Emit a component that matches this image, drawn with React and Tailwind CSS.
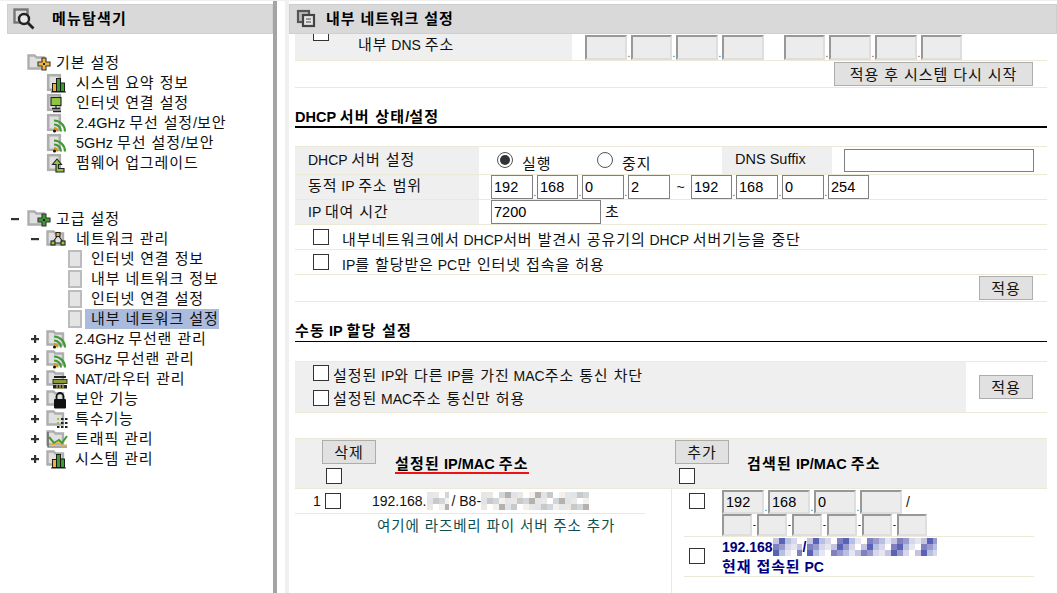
import React from 'react';

// hangul runs are wider than the latin ones in the original font
const T = ({ children, wide }) => {
  const parts = String(children).split(/([\uAC00-\uD7A3]+(?: [\uAC00-\uD7A3]+)*)/);
  return (
    <>
      {parts.map((p, i) =>
        i % 2 === 1 ? (
          <span key={i} className={wide ? 'text-[15px] tracking-[1.2px]' : 'text-[15px] tracking-[0.9px]'}>{p}</span>
        ) : (
          <span key={i}>{p}</span>
        )
      )}
    </>
  );
};

const Folder = () => (
  <path d="M1.500 2.500h6l2 2h7.500v11H1.500z" fill="#e0e0e0" stroke="#aeaeae" strokeWidth="2.400" />
);
const Page = () => <rect x="2.200" y="2.200" width="11.600" height="14.600" fill="#e0e0e0" stroke="#aeaeae" strokeWidth="2.600" />;

const Bars = () => (
  <g stroke="#111" strokeWidth="0.900">
    <rect x="6.500" y="10.500" width="4" height="8" fill="#f0b040" />
    <rect x="10.500" y="5.500" width="4" height="13" fill="#3f9a34" />
    <rect x="14.500" y="10" width="4" height="8.500" fill="#3f9a34" />
    <path d="M5 19h15" />
  </g>
);
const Wifi = () => (
  <g fill="none" strokeWidth="2.200">
    <path d="M8 7.500a11 11 0 0 1 11 11" stroke="#3f9a34" />
    <path d="M8 11.500a7 7 0 0 1 7 7" stroke="#3f9a34" />
    <path d="M8 15a3.500 3.500 0 0 1 3.500 3.500" stroke="#c79a2a" />
    <circle cx="8.500" cy="18" r="1.500" fill="#111" stroke="none" />
  </g>
);
const OVERLAY = {
  bars: <Bars />,
  wifi: <Wifi />,
  monitor: (
    <g>
      <rect x="5" y="4.500" width="10" height="8" fill="#8ec63f" stroke="#222" strokeWidth="1.100" />
      <path d="M10 12.500v3M6 15.500h8M7 18.500h8" stroke="#222" strokeWidth="1.300" />
    </g>
  ),
  arrow: (
    <path d="M11 6l4.500 5.500h-3v4H18v3.500h-8v-7.500H6.500z" fill="#8ec63f" stroke="#222" strokeWidth="1.100" />
  ),
  network: (
    <g stroke="#222" strokeWidth="1.100" fill="none">
      <path d="M12 6l-5 7M12 6l5 7M7 14h10" />
      <rect x="10" y="3.500" width="4" height="4" fill="#f0b040" />
      <rect x="5" y="12" width="4" height="4" fill="#8ec63f" />
      <rect x="15" y="12" width="4" height="4" fill="#8ec63f" />
    </g>
  ),
  router: (
    <g>
      <rect x="8" y="7" width="12" height="2" fill="#222" />
      <rect x="7" y="10.500" width="14" height="4" fill="#8a9a30" stroke="#222" strokeWidth="0.900" />
      <rect x="7" y="16" width="14" height="3.500" fill="#222" />
      <path d="M11 16v3.500M14 16v3.500M17 16v3.500" stroke="#f0d040" strokeWidth="1" />
    </g>
  ),
  lock: (
    <g>
      <path d="M10.500 10V7.500a3.500 3.500 0 0 1 7 0V10" fill="none" stroke="#111" strokeWidth="1.800" />
      <rect x="8" y="10" width="12" height="9.500" rx="1" fill="#111" />
    </g>
  ),
  dots: (
    <g fill="#222">
      <path d="M11 9h2v2h-2zM11 13h2v2h-2z" fill="#8ec63f" />
      <path d="M15 9h2.500v2H15zM19 9h2.500v2H19zM15 13h2.500v2H15zM19 13h2.500v2H19zM11 17h2.500v2H11zM15 17h2.500v2H15zM19 17h2.500v2H19z" />
    </g>
  ),
  chart: (
    <g fill="none">
      <path d="M2 3v15h19" stroke="#555" strokeWidth="1.200" />
      <path d="M3 8l5 6 5-3 3 3 5-7" stroke="#3f9a34" strokeWidth="2" />
      <path d="M3 14l5 2 4-3 4 4 5-1" stroke="#f0b040" strokeWidth="1.500" />
    </g>
  ),
};

const SubIcon = ({ kind, page }) => (
  <svg width="24" height="20" viewBox="0 0 24 20" className="shrink-0">
    {page ? <Page /> : <Folder />}
    {OVERLAY[kind]}
  </svg>
);

const RootIcon = ({ color }) => (
  <svg width="25" height="20" viewBox="0 0 25 20" className="shrink-0">
    <Folder />
    <path
      d="M15 5h4v4h4v4h-4v4h-4v-4h-4V9h4z"
      fill={color}
      stroke="#333"
      strokeWidth="1.100"
    />
    <rect x="16" y="10" width="2" height="2" fill="#222" />
  </svg>
);

const Toggle = ({ open }) => (
  <svg width="8" height="8" viewBox="0 0 8 8" className="shrink-0">
    <rect x="0" y="3" width="8" height="2.200" fill="#333" />
    {!open && <rect x="3" y="0" width="2.200" height="8" fill="#333" />}
  </svg>
);

const Label = ({ children, className = '' }) => (
  <span className={`leading-5 whitespace-nowrap ${className}`}><T>{children}</T></span>
);

const SubRow = ({ kind, children }) => (
  <div className="flex items-center h-5 ml-[39px]">
    <SubIcon kind={kind} page />
    <span className="w-[6px]" />
    <Label>{children}</Label>
  </div>
);

const CollapsedRow = ({ kind, children }) => (
  <div className="flex items-center h-5 ml-[24px]">
    <Toggle />
    <span className="w-[7px]" />
    <SubIcon kind={kind} />
    <span className="w-[5px]" />
    <Label>{children}</Label>
  </div>
);

const Leaf = ({ children, selected }) => (
  <div className="flex items-center h-5 ml-[61px]">
    <span className="w-[14px] h-[18px] bg-[#e4e4e4] border-2 border-[#bcbcbc] shrink-0" />
    <span className="w-[3px]" />
    {selected ? (
      <Label className="bg-[#abbbdd] pl-[6px] h-5">{children}</Label>
    ) : (
      <Label className="ml-[6px]">{children}</Label>
    )}
  </div>
);

const Sidebar = () => (
  <aside className="w-[273px] shrink-0 pl-[7px] pt-[3px]">
    <div className="h-[30px] bg-[#d9d9d9] border border-[#cfcfcf] flex items-center pl-[4px]">
      <svg width="24" height="22" viewBox="0 0 24 22" className="shrink-0">
        <rect x="2.500" y="1.500" width="13" height="13" fill="#ddd" stroke="#777" strokeWidth="2.400" />
        <circle cx="12" cy="11" r="5" fill="#e8e8e8" stroke="#222" strokeWidth="2.400" />
        <path d="M16 15l5.500 5.500" stroke="#222" strokeWidth="2.800" />
      </svg>
      <span className="ml-[16px] font-bold text-black"><T wide>메뉴탐색기</T></span>
    </div>
    <nav className="pt-[19px] text-[#111] text-[14.5px]">
      <div className="flex items-center h-5 ml-5">
        <RootIcon color="#f2b63c" />
        <span className="w-[4px]" />
        <Label>기본 설정</Label>
      </div>
      <SubRow kind="bars">시스템 요약 정보</SubRow>
      <SubRow kind="monitor">인터넷 연결 설정</SubRow>
      <SubRow kind="wifi">2.4GHz 무선 설정/보안</SubRow>
      <SubRow kind="wifi">5GHz 무선 설정/보안</SubRow>
      <SubRow kind="arrow">펌웨어 업그레이드</SubRow>

      <div className="flex items-center h-5 mt-9 ml-[4px]">
        <Toggle open />
        <span className="w-[8px]" />
        <RootIcon color="#3f9a34" />
        <span className="w-[4px]" />
        <Label>고급 설정</Label>
      </div>
      <div className="flex items-center h-5 ml-[24px]">
        <Toggle open />
        <span className="w-[7px]" />
        <SubIcon kind="network" />
        <span className="w-[6px]" />
        <Label>네트워크 관리</Label>
      </div>
      <Leaf>인터넷 연결 정보</Leaf>
      <Leaf>내부 네트워크 정보</Leaf>
      <Leaf>인터넷 연결 설정</Leaf>
      <Leaf selected>내부 네트워크 설정</Leaf>
      <CollapsedRow kind="wifi">2.4GHz 무선랜 관리</CollapsedRow>
      <CollapsedRow kind="wifi">5GHz 무선랜 관리</CollapsedRow>
      <CollapsedRow kind="router">NAT/라우터 관리</CollapsedRow>
      <CollapsedRow kind="lock">보안 기능</CollapsedRow>
      <CollapsedRow kind="dots">특수기능</CollapsedRow>
      <CollapsedRow kind="chart">트래픽 관리</CollapsedRow>
      <CollapsedRow kind="bars">시스템 관리</CollapsedRow>
    </nav>
  </aside>
);

const IpBox = ({ w = 'w-[42px]', h = 'h-[25px]', value = '', disabled }) => (
  <input
    readOnly
    value={value}
    className={`${w} ${h} shrink-0 px-[2px] text-[14.5px] leading-none text-black outline-none ${
      disabled
        ? 'bg-[#ececec] border-2 border-t-[#989898] border-l-[#989898] border-b-[#dedede] border-r-[#dedede]'
        : 'bg-white border border-[#808080]'
    }`}
  />
);

const Dot = () => <span className="w-1 self-end text-[10px] leading-3 text-center text-[#444]">.</span>;

const IpGroup = ({ values, disabled, h, widths }) => (
  <div className="flex">
    {values.map((v, i) => (
      <React.Fragment key={i}>
        {i > 0 && <Dot />}
        <IpBox value={v} disabled={disabled} h={h} w={widths ? widths[i] : 'w-[42px]'} />
      </React.Fragment>
    ))}
  </div>
);

const Check = ({ className = '' }) => (
  <span className={`block w-4 h-4 bg-white border border-[#333] shrink-0 ${className}`} />
);

const Radio = ({ on }) => (
  <span className="w-4 h-4 rounded-full bg-white border border-[#555] flex items-center justify-center shrink-0">
    {on && <span className="w-[10px] h-[10px] rounded-full bg-[#333]" />}
  </span>
);

const Btn = ({ children, className = 'w-[54px]' }) => (
  <button className={`h-6 bg-[#e1e1e1] border border-[#adadad] text-[#111] leading-none shrink-0 ${className}`}>
    <T>{children}</T>
  </button>
);

const Heading = ({ children }) => (
  <div className="font-bold text-black leading-5 text-[14.5px]"><T wide>{children}</T></div>
);

const Mosaic = ({ width, colors }) => {
  const cells = [];
  for (let x = 0; x * 6 < width; x++) {
    for (let y = 0; y < 3; y++) {
      cells.push(
        <rect key={`${x}-${y}`} x={x * 6} y={y * 6} width="6" height="6" fill={colors[(x * 5 + y * 3 + (x % 3)) % colors.length]} />
      );
    }
  }
  return (
    <svg width={width} height="18" viewBox={`0 0 ${width} 18`} className="shrink-0">
      {cells}
    </svg>
  );
};

const GREYS = ['#e6e6e6', '#c9c9c9', '#f4f1ec', '#dfe4ea', '#ffffff', '#b5b1ae', '#ebe8e4', '#cfd6dc'];
const BLUES = ['#c4c4e0', '#9a9acc', '#e6e6f2', '#7f80c0', '#b6c0e0', '#ffffff', '#5a62b8', '#d8d6ea'];

const LINE = 'border-b border-[#ece9d8]';

const Content = () => (
  <div className="ml-[6px] w-[752px] text-[#111]">
    {/* clipped row under the title bar */}
    <div className={`flex h-[27px] ${LINE}`}>
      <div className="w-[277px] bg-[#efefef] relative pl-[18px]">
        <Check className="-mt-[9px]" />
        <span className="absolute left-[63px] top-[1px]"><Label>내부 DNS 주소</Label></span>
      </div>
      <div className="flex pl-[13px] pt-[1px]">
        <IpGroup values={['', '', '', '']} disabled widths={['w-[42px]', 'w-[41px]', 'w-[42px]', 'w-[42px]']} />
        <span className="w-5" />
        <IpGroup values={['', '', '', '']} disabled widths={['w-[41px]', 'w-[42px]', 'w-[42px]', 'w-[41px]']} />
      </div>
    </div>
    <div className={`flex justify-end items-center h-[27px] pr-[14px] ${LINE}`}>
      <Btn className="w-[199px]">적용 후 시스템 다시 시작</Btn>
    </div>

    <div className="pt-[19px] border-b-2 border-black h-[40px]">
      <Heading>DHCP 서버 상태/설정</Heading>
    </div>

    <div className="mt-[18px] border-t border-[#ece9d8]">
      <div className={`flex h-[28px] ${LINE}`}>
        <div className="w-[184px] bg-[#efefef] pl-[13px] pt-[3px]"><Label>DHCP 서버 설정</Label></div>
        <div className="w-[243px] flex pl-[18px] pt-[5px]">
          <Radio on />
          <span className="ml-[9px] leading-5 w-[66px] pt-[2px]"><T>실행</T></span>
          <span className="ml-[9px]" />
          <Radio />
          <span className="ml-[9px] leading-5 pt-[2px]"><T>중지</T></span>
        </div>
        <div className="w-[110px] bg-[#efefef] pl-[13px] leading-6 text-[14.5px]">DNS Suffix</div>
        <div className="pl-3 pt-[2px]"><IpBox w="w-[190px]" h="h-[23px]" /></div>
      </div>
      <div className={`flex h-[25px] ${LINE}`}>
        <div className="w-[184px] bg-[#efefef] pl-[13px] pt-[1px]"><Label>동적 IP 주소 범위</Label></div>
        <div className="flex pl-[12px]">
          <IpGroup values={['192', '168', '0', '2']} h="h-6" widths={['w-[42px]', 'w-[41px]', 'w-[42px]', 'w-[42px]']} />
          <span className="w-[21px] text-center leading-6">~</span>
          <IpGroup values={['192', '168', '0', '254']} h="h-6" widths={['w-[41px]', 'w-[42px]', 'w-[42px]', 'w-[41px]']} />
        </div>
      </div>
      <div className={`flex h-[25px] ${LINE}`}>
        <div className="w-[184px] bg-[#efefef] pl-[13px] pt-[2px]"><Label>IP 대여 시간</Label></div>
        <div className="flex pl-[12px]">
          <IpBox w="w-[110px]" h="h-6" value="7200" />
          <span className="ml-1 leading-6"><T>초</T></span>
        </div>
      </div>
      <div className={`flex items-center h-[25px] pl-[18px] ${LINE}`}>
        <Check className="-mt-px" />
        <span className="ml-[13px] pt-[7px]"><Label>내부네트워크에서 DHCP서버 발견시 공유기의 DHCP 서버기능을 중단</Label></span>
      </div>
      <div className={`flex items-center h-[25px] pl-[18px] ${LINE}`}>
        <Check className="-mt-px" />
        <span className="ml-[13px] pt-[7px]"><Label>IP를 할당받은 PC만 인터넷 접속을 허용</Label></span>
      </div>
      <div className={`flex justify-end items-center h-[27px] pr-[14px] ${LINE}`}>
        <Btn>적용</Btn>
      </div>
    </div>

    <div className="pt-[19px] border-b border-black h-[40px]">
      <Heading>수동 IP 할당 설정</Heading>
    </div>

    <div className={`mt-[19px] flex h-[52px] border-t border-[#ece9d8] ${LINE}`}>
      <div className="w-[671px] bg-[#efefef] pl-[18px]">
        <div className="flex items-center h-[22px]">
          <Check />
          <span className="ml-1 pt-[6px]"><Label>설정된 IP와 다른 IP를 가진 MAC주소 통신 차단</Label></span>
        </div>
        <div className="flex items-center h-[28px]">
          <Check />
          <span className="ml-1 pt-[2px]"><Label>설정된 MAC주소 통신만 허용</Label></span>
        </div>
      </div>
      <div className="flex-1 flex justify-end items-center pr-[14px]">
        <Btn>적용</Btn>
      </div>
    </div>

    <div className="mt-[25px] flex h-[51px] bg-[#efefef] border-t border-b border-[#ece9d8]">
      <div className="w-[380px] flex pl-[27px] pt-[1px]">
        <div className="w-[73px]">
          <Btn>삭제</Btn>
          <Check className="mt-1 ml-1" />
        </div>
        <div className="pt-[14px]">
          <div className="relative">
            <Heading>설정된 IP/MAC 주소</Heading>
            <span className="absolute left-0 right-0 top-[18px] h-[2px] bg-[#ee1111]" />
          </div>
        </div>
      </div>
      <div className="flex pt-[1px]">
        <div className="w-[72px]">
          <Btn>추가</Btn>
          <Check className="mt-1 ml-1" />
        </div>
        <div className="pt-[14px]">
          <Heading>검색된 IP/MAC 주소</Heading>
        </div>
      </div>
    </div>

    <div className="flex">
      <div className="w-[376px]">
        <div className={`flex items-center h-[25px] w-[350px] ${LINE}`}>
          <span className="ml-[18px] w-3">1</span>
          <Check />
          <span className="ml-[31px] whitespace-nowrap">192.168.</span>
          <Mosaic width={22} colors={GREYS} />
          <span className="ml-[3px] whitespace-nowrap">/ B8-</span>
          <Mosaic width={108} colors={GREYS} />
        </div>
        <div className="pl-[82px] pt-[1px] text-[#0a5050] leading-[22px]">
          <span className="text-[14.5px] tracking-[0.9px]">여기에 라즈베리 파이 서버 주소 추가</span>
        </div>
      </div>
      <div className="border-l border-[#ece9d8] h-[110px] pl-3 w-[363px]">
        <div className={`flex h-[48px] ${LINE}`}>
          <Check className="ml-[5px] mt-1" />
          <div className="ml-[17px] pt-[1px]">
            <div className="flex">
              <IpGroup values={['192', '168', '0', '']} disabled h="h-6" />
              <span className="ml-1 leading-6">/</span>
            </div>
            <div className="flex">
              {[0, 1, 2, 3, 4, 5].map((i) => (
                <React.Fragment key={i}>
                  {i > 0 && <span className="w-[5px] text-[10px] leading-[22px] text-center">-</span>}
                  <IpBox w="w-[30px]" h="h-[22px]" disabled />
                </React.Fragment>
              ))}
            </div>
          </div>
        </div>
        <div className={`flex h-[40px] ${LINE}`}>
          <Check className="ml-[5px] mt-[11px]" />
          <div className="ml-[17px] font-bold text-[#000080]">
            <div className="flex h-[20px] items-center">
              <span className="whitespace-nowrap">192.168</span>
              <Mosaic width={29} colors={BLUES} />
              <span className="ml-[1px]">/</span>
              <Mosaic width={130} colors={BLUES} />
            </div>
            <div className="leading-[20px]"><T>현재 접속된 PC</T></div>
          </div>
        </div>
      </div>
    </div>
  </div>
);

export default function App() {
  return (
    <div className="w-[1057px] h-[593px] overflow-hidden flex bg-white border-t border-[#efefef] text-[14px] font-['Liberation_Sans','Noto_Sans_CJK_KR',sans-serif]">
      <Sidebar />
      <div className="w-1 shrink-0 bg-[#a4a4a4]" />
      <div className="w-2 shrink-0" />
      <div className="w-1 shrink-0 bg-[#f0f0f0]" />
      <main className="flex-1 min-w-0 pt-[3px] flex flex-col overflow-hidden">
        <div className="h-[30px] shrink-0 relative z-10 bg-[#d9d9d9] border border-[#cfcfcf] flex items-center pl-[6px]">
          <svg width="20" height="20" viewBox="0 0 20 20" className="shrink-0">
            <rect x="2" y="2" width="11" height="11" fill="#bbb" stroke="#555" strokeWidth="2.200" />
            <rect x="7" y="6" width="11" height="11" fill="#e6e6e6" stroke="#444" strokeWidth="2.200" />
            <path d="M10 10h5M10 13h5" stroke="#444" strokeWidth="1.200" />
          </svg>
          <span className="ml-[10px] font-bold text-black"><T>내부 네트워크 설정</T></span>
        </div>
        <Content />
      </main>
    </div>
  );
}
